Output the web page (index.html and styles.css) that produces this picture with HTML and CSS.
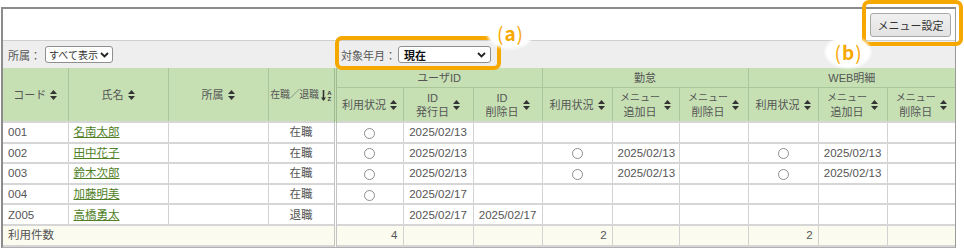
FILE: index.html
```html
<!DOCTYPE html>
<html lang="ja">
<head>
<meta charset="utf-8">
<title>利用状況一覧</title>
<link rel="stylesheet" href="styles.css">
</head>
<body>
<div class="page">
  <div class="frame">
    <div class="toolbar">
      <button class="btn" type="button">メニュー設定</button>
    </div>
    <div class="filters">
      <div class="filter filter-dept">
        <span class="lbl">所属：</span>
        <div class="sel sel-dept"><span class="val">すべて表示</span><svg class="chev" width="9" height="6" viewBox="0 0 9 6"><path d="M1 1 L4.5 4.5 L8 1" /></svg></div>
      </div>
      <div class="filter filter-month">
        <span class="lbl">対象年月：</span>
        <div class="sel sel-month"><span class="val strong">現在</span><svg class="chev" width="9" height="6" viewBox="0 0 9 6"><path d="M1 1 L4.5 4.5 L8 1" /></svg></div>
      </div>
    </div>
    <table class="grid">
      <colgroup>
        <col class="w65"><col class="w100"><col class="w100"><col class="w67">
        <col class="w68"><col class="w70"><col class="w69">
        <col class="w70"><col class="w67"><col class="w69">
        <col class="w70"><col class="w69"><col class="w68">
      </colgroup>
      <thead>
        <tr class="g">
          <th rowspan="2"><span class="hd">コード<svg class="sort" width="7" height="10" viewBox="0 0 7 10"><path d="M3.5 0 L7 4 L0 4 Z M0 6 L7 6 L3.5 10 Z"/></svg></span></th>
          <th rowspan="2"><span class="hd">氏名<svg class="sort" width="7" height="10" viewBox="0 0 7 10"><path d="M3.5 0 L7 4 L0 4 Z M0 6 L7 6 L3.5 10 Z"/></svg></span></th>
          <th rowspan="2"><span class="hd">所属<svg class="sort" width="7" height="10" viewBox="0 0 7 10"><path d="M3.5 0 L7 4 L0 4 Z M0 6 L7 6 L3.5 10 Z"/></svg></span></th>
          <th rowspan="2" class="sep"><span class="hd tight">在職／退職<svg class="az" width="11" height="13" viewBox="0 0 11 13"><path d="M2.5 1 L2.5 11" /><path class="fill" d="M0 8.5 L5 8.5 L2.5 12 Z"/><text x="8.3" y="5.6">A</text><text x="8.3" y="12">Z</text></svg></span></th>
          <th colspan="3">ユーザID</th>
          <th colspan="3">勤怠</th>
          <th colspan="3">WEB明細</th>
        </tr>
        <tr class="s">
          <th><span class="hd">利用状況<svg class="sort" width="7" height="10" viewBox="0 0 7 10"><path d="M3.5 0 L7 4 L0 4 Z M0 6 L7 6 L3.5 10 Z"/></svg></span></th>
          <th><span class="hd"><span class="two">ID<br>発行日</span><svg class="sort" width="7" height="10" viewBox="0 0 7 10"><path d="M3.5 0 L7 4 L0 4 Z M0 6 L7 6 L3.5 10 Z"/></svg></span></th>
          <th><span class="hd"><span class="two">ID<br>削除日</span><svg class="sort" width="7" height="10" viewBox="0 0 7 10"><path d="M3.5 0 L7 4 L0 4 Z M0 6 L7 6 L3.5 10 Z"/></svg></span></th>
          <th><span class="hd">利用状況<svg class="sort" width="7" height="10" viewBox="0 0 7 10"><path d="M3.5 0 L7 4 L0 4 Z M0 6 L7 6 L3.5 10 Z"/></svg></span></th>
          <th><span class="hd"><span class="two"><span class="sm">メニュー</span><br>追加日</span><svg class="sort" width="7" height="10" viewBox="0 0 7 10"><path d="M3.5 0 L7 4 L0 4 Z M0 6 L7 6 L3.5 10 Z"/></svg></span></th>
          <th><span class="hd"><span class="two"><span class="sm">メニュー</span><br>削除日</span><svg class="sort" width="7" height="10" viewBox="0 0 7 10"><path d="M3.5 0 L7 4 L0 4 Z M0 6 L7 6 L3.5 10 Z"/></svg></span></th>
          <th><span class="hd">利用状況<svg class="sort" width="7" height="10" viewBox="0 0 7 10"><path d="M3.5 0 L7 4 L0 4 Z M0 6 L7 6 L3.5 10 Z"/></svg></span></th>
          <th><span class="hd"><span class="two"><span class="sm">メニュー</span><br>追加日</span><svg class="sort" width="7" height="10" viewBox="0 0 7 10"><path d="M3.5 0 L7 4 L0 4 Z M0 6 L7 6 L3.5 10 Z"/></svg></span></th>
          <th><span class="hd"><span class="two"><span class="sm">メニュー</span><br>削除日</span><svg class="sort" width="7" height="10" viewBox="0 0 7 10"><path d="M3.5 0 L7 4 L0 4 Z M0 6 L7 6 L3.5 10 Z"/></svg></span></th>
        </tr>
      </thead>
      <tbody>
        <tr>
          <td>001</td><td><a href="#">名南太郎</a></td><td></td><td class="c sep">在職</td>
          <td class="c"><span class="dot"></span></td><td class="c">2025/02/13</td><td class="c"></td>
          <td class="c"></td><td class="c"></td><td class="c"></td>
          <td class="c"></td><td class="c"></td><td class="c"></td>
        </tr>
        <tr>
          <td>002</td><td><a href="#">田中花子</a></td><td></td><td class="c sep">在職</td>
          <td class="c"><span class="dot"></span></td><td class="c">2025/02/13</td><td class="c"></td>
          <td class="c"><span class="dot"></span></td><td class="c">2025/02/13</td><td class="c"></td>
          <td class="c"><span class="dot"></span></td><td class="c">2025/02/13</td><td class="c"></td>
        </tr>
        <tr>
          <td>003</td><td><a href="#">鈴木次郎</a></td><td></td><td class="c sep">在職</td>
          <td class="c"><span class="dot"></span></td><td class="c">2025/02/13</td><td class="c"></td>
          <td class="c"><span class="dot"></span></td><td class="c">2025/02/13</td><td class="c"></td>
          <td class="c"><span class="dot"></span></td><td class="c">2025/02/13</td><td class="c"></td>
        </tr>
        <tr>
          <td>004</td><td><a href="#">加藤明美</a></td><td></td><td class="c sep">在職</td>
          <td class="c"><span class="dot"></span></td><td class="c">2025/02/17</td><td class="c"></td>
          <td class="c"></td><td class="c"></td><td class="c"></td>
          <td class="c"></td><td class="c"></td><td class="c"></td>
        </tr>
        <tr>
          <td>Z005</td><td><a href="#">高橋勇太</a></td><td></td><td class="c sep">退職</td>
          <td class="c"></td><td class="c">2025/02/17</td><td class="c">2025/02/17</td>
          <td class="c"></td><td class="c"></td><td class="c"></td>
          <td class="c"></td><td class="c"></td><td class="c"></td>
        </tr>
      </tbody>
      <tfoot>
        <tr>
          <td colspan="4" class="sep">利用件数</td>
          <td class="r">4</td><td></td><td></td>
          <td class="r">2</td><td></td><td></td>
          <td class="r">2</td><td></td><td></td>
        </tr>
      </tfoot>
    </table>
  </div>
  <div class="mark mark-a"></div>
  <div class="mark mark-b"></div>
  <span class="badge badge-a">(<b>a</b>)</span>
  <span class="badge badge-b">(<b>b</b>)</span>
</div>
</body>
</html>
```
FILE: styles.css
```css
html, body {
  margin: 0;
  padding: 0;
  background: #ffffff;
}
body {
  font-family: "Liberation Sans", "Noto Sans CJK JP", sans-serif;
  font-size: 11.5px;
  color: #555555;
  line-height: 14px;
}
.page {
  position: relative;
  width: 964px;
  height: 250px;
  overflow: hidden;
}
.frame {
  margin: 7px 0 0 1px;
  width: 952px;
  border-top: 2px solid #8c8c8c;
  border-left: 2px solid #8c8c8c;
  border-right: 1px solid #9a9a9a;
  border-bottom: 1px solid #b0b0b0;
}
.toolbar {
  height: 31px;
  box-sizing: border-box;
  padding: 4px 4px 0 0;
  display: flex;
  justify-content: flex-end;
  align-items: flex-start;
}
.btn {
  width: 81px;
  height: 24px;
  margin: 0;
  padding: 0;
  border: 1px solid #a8a8a8;
  border-radius: 3px;
  background: linear-gradient(#f0f0f0, #e2e2e2);
  color: #333333;
  font-family: "Noto Sans CJK JP", sans-serif;
  font-size: 11px;
  line-height: 22px;
}
.filters {
  height: 27px;
  border-top: 1px solid #cfcfcf;
  background: #eeeeee;
  display: flex;
  align-items: center;
}
.filter {
  display: flex;
  align-items: center;
}
.filter-dept {
  width: 332px;
  padding-left: 5px;
  box-sizing: border-box;
}
.filter-month {
  padding-left: 6px;
}
.lbl {
  font-family: "Noto Sans CJK JP", sans-serif;
  font-size: 11px;
  color: #555555;
  margin-right: 2px;
  white-space: nowrap;
}
.sel {
  height: 17px;
  box-sizing: border-box;
  border: 1px solid #8f8f8f;
  border-radius: 3px;
  background: #ffffff;
  display: flex;
  align-items: center;
  justify-content: space-between;
  padding: 0 4px 0 3px;
  font-family: "Noto Sans CJK JP", sans-serif;
  font-size: 11px;
  color: #333333;
  white-space: nowrap;
}
.sel-dept {
  width: 68px;
  margin-left: 2px;
  font-size: 10px;
  padding: 0 3px 0 3px;
}
.sel-month {
  width: 93px;
  padding-left: 5px;
}
.val.strong {
  font-weight: bold;
  color: #111111;
}
.chev {
  flex: none;
}
.chev path {
  fill: none;
  stroke: #222222;
  stroke-width: 1.8;
}
.grid {
  border-collapse: collapse;
  table-layout: fixed;
  width: 952px;
}
.w65 { width: 65px; }
.w67 { width: 67px; }
.w68 { width: 68px; }
.w69 { width: 69px; }
.w70 { width: 70px; }
.w100 { width: 100px; }
.grid th {
  background: #c6e0b4;
  color: #555555;
  font-weight: normal;
  font-size: 11px;
  line-height: 14px;
  border: 1px solid #aac79c;
  padding: 0;
  text-align: center;
  white-space: nowrap;
}
.grid tr.g th {
  height: 19px;
  border-top: none;
}
.grid tr.s th {
  height: 33px;
}
.grid th:first-child,
.grid td:first-child {
  border-left: none;
}
.grid th:last-child,
.grid td:last-child {
  border-right: none;
}
.grid th.sep {
  border-right: 3px double #9fbb92;
}
.hd {
  display: inline-flex;
  align-items: center;
  gap: 4px;
}
.hd.tight {
  gap: 2px;
  font-size: 10px;
  letter-spacing: -0.3px;
}
.two {
  display: inline-block;
  text-align: center;
  line-height: 14px;
}
.sm {
  font-size: 10px;
}
.sort {
  fill: #333333;
  flex: none;
}
.az {
  flex: none;
}
.az path {
  stroke: #333333;
  stroke-width: 1.6;
  fill: none;
}
.az path.fill {
  fill: #333333;
  stroke: none;
}
.az text {
  font-family: "Liberation Sans", sans-serif;
  font-size: 6px;
  font-weight: bold;
  fill: #333333;
  text-anchor: middle;
}
.grid td {
  height: 18.6px;
  padding: 0 5px;
  border-top: 2px solid #d6d6d6;
  border-bottom: 2px solid #d6d6d6;
  border-left: 1px solid #d2d2d2;
  border-right: 1px solid #d2d2d2;
  white-space: nowrap;
  color: #555555;
  background: #ffffff;
}
.grid td.sep {
  border-right: 3px double #c4c4c4;
}
.grid td.c {
  text-align: center;
}
.grid td.r {
  text-align: right;
}
.grid tfoot td {
  background: #fbfbef;
  height: 19px;
}
.grid a {
  color: #4f7f27;
  text-decoration: underline;
}
.dot {
  display: inline-block;
  width: 9px;
  height: 9px;
  border: 1.3px solid #8e8e8e;
  border-radius: 50%;
  vertical-align: middle;
}
.mark {
  position: absolute;
  box-sizing: border-box;
  border: 4px solid #f7a800;
  border-radius: 7px;
}
.mark-a {
  left: 335px;
  top: 36px;
  width: 166px;
  height: 34px;
}
.mark-b {
  left: 862px;
  top: 0;
  width: 101px;
  height: 46px;
}
.badge {
  position: absolute;
  width: 42px;
  height: 28px;
  display: flex;
  align-items: center;
  justify-content: center;
  background: #ffffff;
  border-radius: 50%;
  box-shadow: 0 0 3px 2px #ffffff;
  color: #f7a800;
  font-family: "Noto Sans CJK JP", sans-serif;
  font-size: 19px;
  line-height: 22px;
}
.badge b {
  font-weight: bold;
  margin: 0 1px;
}
.badge-a {
  left: 489px;
  top: 19px;
}
.badge-b {
  left: 827px;
  top: 38px;
}
```
